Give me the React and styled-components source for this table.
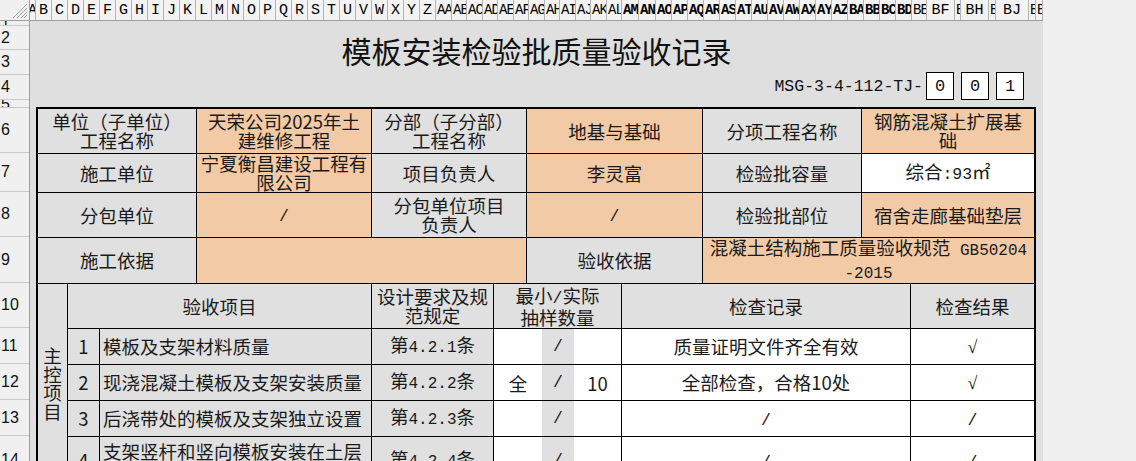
import React from 'react';
import styled, { createGlobalStyle } from 'styled-components';

const CJK = `"Noto Sans CJK SC", sans-serif`;

const GlobalStyle = createGlobalStyle`
  html, body { margin: 0; padding: 0; background: #f0f0f0; overflow: hidden; }
  body { width: 1136px; height: 461px; }
  *, *::before, *::after { box-sizing: border-box; }
`;

const BG = { grey: '#e0e0e0', orange: '#f2caa5', white: '#ffffff' };

const Page = styled.div`
  width: 1043px;
  height: 461px;
  display: flex;
  flex-direction: column;
  overflow: hidden;
`;

const ColHeaderBar = styled.div`
  display: flex;
  flex: none;
  height: 21px;
  background: #f3f3f3;
  border-bottom: 1px solid #a0a0a0;
`;

const Corner = styled.div`
  width: 30px;
  flex: none;
  display: flex;
  align-items: flex-end;
  justify-content: flex-end;
  padding: 0 2px 2px 0;
  background: #f0f0f0;
  border-right: 1px solid #a0a0a0;
`;

const ColHead = styled.div`
  width: ${p => p.$w}px;
  flex: none;
  display: flex;
  align-items: center;
  justify-content: ${p => (p.$tight ? 'flex-start' : 'center')};
  padding-left: ${p => (p.$tight ? '1px' : '0')};
  overflow: hidden;
  white-space: nowrap;
  border-right: 1px solid #b4b4b4;
  font-family: "Liberation Mono", monospace;
  font-size: ${p => (p.$tight ? '14px' : '15px')};
  letter-spacing: ${p => (p.$tight ? '-0.8px' : '0')};
  font-weight: ${p => (p.$bold ? 700 : 400)};
  color: #000;
`;

const Body = styled.div`
  display: flex;
  flex: 1;
  min-height: 0;
`;

const RowHeads = styled.div`
  width: 30px;
  flex: none;
  display: flex;
  flex-direction: column;
  overflow: hidden;
  background: #f0f0f0;
  border-right: 1px solid #a0a0a0;
`;

const RowHead = styled.div`
  height: ${p => p.$h}px;
  flex: none;
  display: flex;
  align-items: center;
  padding-left: 1px;
  overflow: hidden;
  border-bottom: 1px solid #c8c8c8;
  font-family: "Liberation Sans", sans-serif;
  font-size: 16px;
  line-height: 1;
  color: #111;
`;

const Canvas = styled.div`
  flex: 1;
  min-width: 0;
  display: flex;
  flex-direction: column;
  padding: 0 6px;
  overflow: hidden;
  background: #dfdfdf;
`;

const TitleBlock = styled.div`
  height: 51px;
  flex: none;
  display: flex;
  align-items: center;
  justify-content: center;
  padding-top: 7px;
  font-family: ${CJK};
  font-size: 30px;
  font-weight: 400;
  color: #111;
`;

const CodeRow = styled.div`
  height: 28px;
  flex: none;
  display: flex;
  align-items: center;
  justify-content: flex-end;
  padding-right: 13px;
`;

const CodeText = styled.span`
  font-family: "Liberation Mono", monospace;
  font-size: 16.5px;
  color: #111;
  margin-right: 3px;
`;

const NumBox = styled.div`
  width: 28px;
  height: 28px;
  margin-left: ${p => p.$gap}px;
  display: flex;
  align-items: center;
  justify-content: center;
  background: #fff;
  border: 1px solid #000;
  font-family: "Liberation Mono", monospace;
  font-size: 17px;
  color: #111;
`;

const Spacer = styled.div`
  height: 7px;
  flex: none;
`;

const Table = styled.div`
  width: 1000px;
  flex: none;
  display: grid;
  grid-template-columns: 29px 31px 96px 174px 121px 32px 14px 31px 47px 80px 158px 48px 123px;
  grid-template-rows: 44px 38px 44px 45px 44px 35px 35px 35px 47px;
  gap: 1px;
  background: #000;
  border: 2px solid #000;
`;

const CellBox = styled.div`
  grid-column: ${p => p.$col};
  grid-row: ${p => p.$row};
  background: ${p => BG[p.$bg || 'grey']};
  display: flex;
  align-items: center;
  justify-content: ${p => (p.$left ? 'flex-start' : 'center')};
  padding: 0 ${p => (p.$left ? '3px' : '1px')};
  overflow: hidden;
  font-family: ${CJK};
  font-size: 18.5px;
  line-height: 19px;
  color: #1a1a1a;
`;

const CellText = styled.span`
  display: block;
  white-space: nowrap;
  text-align: ${p => (p.$left ? 'left' : 'center')};
`;

const Cell = ({ children, ...rest }) => (
  <CellBox {...rest}>
    <CellText $left={rest.$left}>{children}</CellText>
  </CellBox>
);

const Lat = styled.span`
  font-family: "Liberation Mono", monospace;
  font-size: ${p => p.$size || 16.5}px;
`;

const Check = styled.span`
  font-family: "Liberation Serif", serif;
  font-size: 18px;
`;

const VerticalText = styled.span`
  display: block;
  writing-mode: vertical-rl;
  text-orientation: upright;
  line-height: 20px;
`;

const Sample = styled.div`
  grid-column: 6 / 10;
  grid-row: ${p => p.$row};
  display: flex;
  background: #fff;
  font-family: ${CJK};
  font-size: 18.5px;
  color: #1a1a1a;
`;

const SamplePart = styled.div`
  width: ${p => (p.$w ? `${p.$w}px` : 'auto')};
  flex: ${p => (p.$w ? 'none' : '1')};
  display: flex;
  align-items: center;
  justify-content: center;
  background: ${p => (p.$grey ? BG.grey : BG.white)};
`;

const cols = (() => {
  const list = [['A', 6]];
  'BCDEFGHIJKLMNOPQRSTUVWXYZ'.split('').forEach(c => list.push([c, 16]));
  'ABCDEFGHIJKL'.split('').forEach((c, i) => list.push(['A' + c, i % 2 === 0 ? 16 : 15, false]));
  'MNOPQRSTUVWXYZ'.split('').forEach((c, i) => list.push(['A' + c, i < 2 ? 17 : 16, true]));
  'ABCD'.split('').forEach(c => list.push(['B' + c, 16, true]));
  list.push(['BE', 15], ['BF', 28], ['BG', 6], ['BH', 28], ['BI', 7], ['BJ', 33], ['BK', 7], ['BL', 7]);
  return list;
})();

const rows = [
  ['1', 5], ['2', 24], ['3', 25], ['4', 25], ['5', 8], ['6', 45], ['7', 39], ['8', 45],
  ['9', 46], ['10', 45], ['11', 36], ['12', 36], ['13', 36], ['14', 48],
];

const items = [
  { n: '1', t: '模板及支架材料质量', s: '1', a: ['', '/', ''], r: '质量证明文件齐全有效', res: '√' },
  { n: '2', t: '现浇混凝土模板及支架安装质量', s: '2', a: ['全', '/', '10'], r: '全部检查，合格10处', res: '√' },
  { n: '3', t: '后浇带处的模板及支架独立设置', s: '3', a: ['', '/', ''], r: '/', res: '/' },
  { n: '4', t: <>支架竖杆和竖向模板安装在土层<br />上时，应符合下列规定</>, s: '4', a: ['', '/', ''], r: '/', res: '/' },
];

const CornerHatch = () => (
  <svg width="14" height="14" viewBox="0 0 14 14">
    <path d="M14 0 L0 14 M14 4 L4 14 M14 8 L8 14 M14 11 L11 14" stroke="#a8a8a8" strokeWidth="1" />
  </svg>
);

const mark = v => (v === '/' ? <Lat>/</Lat> : v === '√' ? <Check>√</Check> : v);

export default function App() {
  return (
    <>
      <GlobalStyle />
      <Page>
        <ColHeaderBar>
          <Corner><CornerHatch /></Corner>
          {cols.map(([c, w, bold]) => (
            <ColHead key={c} $w={w} $tight={c.length > 1 && w < 20} $bold={bold}>{c}</ColHead>
          ))}
        </ColHeaderBar>
        <Body>
          <RowHeads>
            {rows.map(([r, h]) => (
              <RowHead key={r} $h={h}>{r}</RowHead>
            ))}
          </RowHeads>
          <Canvas>
            <TitleBlock>模板安装检验批质量验收记录</TitleBlock>
            <CodeRow>
              <CodeText>MSG-3-4-112-TJ-</CodeText>
              <NumBox $gap={0}>0</NumBox>
              <NumBox $gap={7}>0</NumBox>
              <NumBox $gap={7}>1</NumBox>
            </CodeRow>
            <Spacer />
            <Table>
              <Cell $col="1 / 4" $row={1}>单位（子单位）<br />工程名称</Cell>
              <Cell $col="4 / 5" $row={1} $bg="orange">天荣公司2025年土<br />建维修工程</Cell>
              <Cell $col="5 / 7" $row={1}>分部（子分部）<br />工程名称</Cell>
              <Cell $col="7 / 11" $row={1} $bg="orange">地基与基础</Cell>
              <Cell $col="11 / 12" $row={1}>分项工程名称</Cell>
              <Cell $col="12 / 14" $row={1} $bg="orange">钢筋混凝土扩展基<br />础</Cell>

              <Cell $col="1 / 4" $row={2}>施工单位</Cell>
              <Cell $col="4 / 5" $row={2} $bg="orange">宁夏衡昌建设工程有<br />限公司</Cell>
              <Cell $col="5 / 7" $row={2}>项目负责人</Cell>
              <Cell $col="7 / 11" $row={2} $bg="orange">李灵富</Cell>
              <Cell $col="11 / 12" $row={2}>检验批容量</Cell>
              <Cell $col="12 / 14" $row={2} $bg="white">综合<Lat>:93</Lat>㎡</Cell>

              <Cell $col="1 / 4" $row={3}>分包单位</Cell>
              <Cell $col="4 / 5" $row={3} $bg="orange"><Lat>/</Lat></Cell>
              <Cell $col="5 / 7" $row={3}>分包单位项目<br />负责人</Cell>
              <Cell $col="7 / 11" $row={3} $bg="orange"><Lat>/</Lat></Cell>
              <Cell $col="11 / 12" $row={3}>检验批部位</Cell>
              <Cell $col="12 / 14" $row={3} $bg="orange">宿舍走廊基础垫层</Cell>

              <Cell $col="1 / 4" $row={4}>施工依据</Cell>
              <Cell $col="4 / 7" $row={4} $bg="orange" />
              <Cell $col="7 / 11" $row={4}>验收依据</Cell>
              <Cell $col="11 / 14" $row={4} $bg="orange">
                混凝土结构施工质量验收规范<Lat $size={16}> GB50204</Lat><br /><Lat $size={16}>-2015</Lat>
              </Cell>

              <Cell $col="1 / 2" $row="5 / 10"><VerticalText>主控项目</VerticalText></Cell>
              <Cell $col="2 / 5" $row={5}>验收项目</Cell>
              <Cell $col="5 / 6" $row={5}>设计要求及规<br />范规定</Cell>
              <Cell $col="6 / 10" $row={5}>最小<Lat>/</Lat>实际<br />抽样数量</Cell>
              <Cell $col="10 / 13" $row={5}>检查记录</Cell>
              <Cell $col="13 / 14" $row={5}>检查结果</Cell>

              {items.map((it, i) => {
                const row = 6 + i;
                return (
                  <React.Fragment key={it.n}>
                    <Cell $col="2 / 3" $row={row}>{it.n}</Cell>
                    <Cell $col="3 / 5" $row={row} $left>{it.t}</Cell>
                    <Cell $col="5 / 6" $row={row}>第<Lat $size={16}>4.2.{it.s}</Lat>条</Cell>
                    <Sample $row={row}>
                      <SamplePart $w={48}>{it.a[0]}</SamplePart>
                      <SamplePart $w={32} $grey><Lat>{it.a[1]}</Lat></SamplePart>
                      <SamplePart>{it.a[2]}</SamplePart>
                    </Sample>
                    <Cell $col="10 / 13" $row={row} $bg="white">{mark(it.r)}</Cell>
                    <Cell $col="13 / 14" $row={row} $bg="white">{mark(it.res)}</Cell>
                  </React.Fragment>
                );
              })}
            </Table>
          </Canvas>
        </Body>
      </Page>
    </>
  );
}
